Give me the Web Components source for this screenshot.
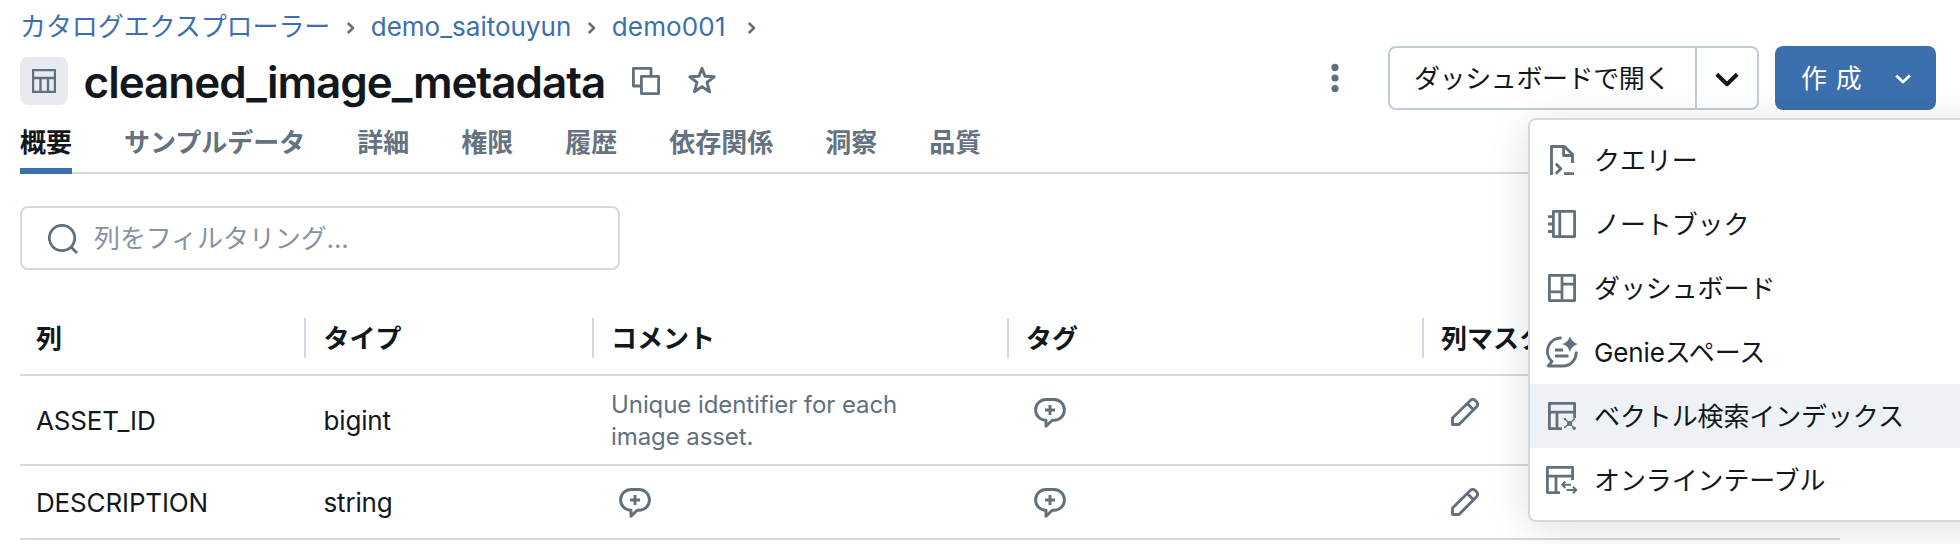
<!DOCTYPE html>
<html lang="ja">
<head>
<meta charset="utf-8">
<title>cleaned_image_metadata</title>
<style>
  html, body { margin: 0; height: 544px; overflow: hidden; background: #fff; }
  body {
    --text: #11171c; --muted: #62707d; --line: #d1d9e1; --blue: #3b6fae;
    font: 26px/32px Inter, "Noto Sans CJK JP", sans-serif; color: var(--text);
  }
</style>
</head>
<body>
<catalog-page></catalog-page>
<script>
const ICONS = {
  chevron: [9, 14, '<path d="M1.8 2 7 7 1.8 12" stroke-width="2.5"/>'],
  table: [24, 24, '<path d="M1 1h22v22H1zM1 9h22M8.5 9v14M16 9v14" stroke-width="2.4"/>'],
  copy: [28, 28, '<path d="M9 19H1.4V1.4H19V9M9.4 9.4h17.2v17.2H9.4z" stroke-width="2.8"/>'],
  star: [30, 30, '<path d="M15 3.2 18 11.3 27.2 11.8 20 17.4 22.6 26.8 15 21.6 7.4 26.8 10 17.4 2.8 11.8 12 11.3z" stroke-width="2.9"/>'],
  kebab: [8, 30, '<g fill="currentColor" stroke="none"><circle cx="4" cy="4.4" r="3.6"/><circle cx="4" cy="15" r="3.6"/><circle cx="4" cy="25.6" r="3.6"/></g>'],
  down: [24, 15, '<path d="M1.8 2.2 12 12.2 22.2 2.2" stroke-width="4"/>'],
  downSmall: [16, 10, '<path d="M1.2 1.4 8 8 14.8 1.4" stroke-width="2.8"/>'],
  search: [30, 30, '<circle cx="14" cy="14" r="12.7" stroke-width="2.8"/><path d="M23 23l6 6" stroke-width="2.8"/>'],
  bubble: [32, 31, '<path d="M12 1.5h8a10.4 10.4 0 0 1 0 20.8h-1.8L12 28.3v-6a10.4 10.4 0 0 1 0-20.8zM16 7v10M11 12h10" stroke-width="2.9"/>'],
  pencil: [28, 28, '<path d="M1.5 26.5V20L19.6 2.2q2.4-1.8 4.6.3l1.3 1.3q2.1 2.2.3 4.6L8 26.5zM16.3 5.5l6.2 6.2" stroke-width="2.9"/>'],
  query: [24, 30, '<path d="M1.5 30V1.5h13l8 8V18M13.6 1.5v9h9M5.8 18.8l5 5-5 5M14 28.6h10" stroke-width="2.9"/>'],
  notebook: [28, 28, '<path d="M5.4 1.4h21.2v25.2H5.4zM11.8 1.4v25.2M0 6.6h5M0 14h5M0 21.5h5" stroke-width="2.8"/>'],
  dashboard: [28, 28, '<path d="M1.4 1.4h25.2v25.2H1.4zM14 1.4v25.2M1.4 17.8H14M14 10.2h12.6" stroke-width="2.8"/>'],
  genie: [32, 32, '<path d="M15.6 2A13.4 13.4 0 0 0 6 25.4L2.2 30H17A13.4 13.4 0 0 0 30.2 15.6M9 14h8M9 20h13.5" stroke-width="2.9"/><path d="M24 .2q1.8 6 7.8 7.8-6 1.8-7.8 7.8-1.8-6-7.8-7.8 6-1.8 7.8-7.8z" fill="currentColor" stroke="none"/>'],
  vector: [28, 28, '<path d="M14 26.6H1.4V1.4h25.2V16M1.4 10.2h25.2M9 10.2v16.4" stroke-width="2.8"/><path d="M17 17l4.5 4.5L26.5 17M17 25l4.5-3.5L26 26" stroke-width="1.3"/><g fill="currentColor" stroke="none"><circle cx="21.6" cy="21.6" r="2.5"/><circle cx="17" cy="17" r="1.2"/><circle cx="26.2" cy="17.2" r="1"/><circle cx="16.8" cy="25.2" r="1"/><circle cx="26.2" cy="26.2" r="1.7"/></g>'],
  online: [32, 28, '<path d="M14 26.6H1.4V1.4h25.2V14M1.4 10.2h25.2M10 10.2v16.4" stroke-width="2.8"/><path d="M25 18.8h-8.6M19.4 15.6l-3.2 3.2 3.2 3.2M20.5 24h9.6M27 20.8l3.2 3.2-3.2 3.2" stroke-width="2"/>']
};

class Base extends HTMLElement {
  connectedCallback() {
    if (this.shadowRoot) return;
    this.attachShadow({ mode: 'open' }).innerHTML = this.render();
  }
}
const define = (name, render) =>
  customElements.define(name, class extends Base { render() { return render(this); } });

define('ui-icon', el => {
  const [w, h, body] = ICONS[el.getAttribute('name')];
  return `<style>:host{display:block;flex:none;color:var(--muted)}svg{display:block}</style>
    <svg width="${w}" height="${h}" viewBox="0 0 ${w} ${h}" fill="none" stroke="currentColor" stroke-linejoin="round">${body}</svg>`;
});

define('bread-crumbs', () => `
  <style>
    :host{display:flex;align-items:center;height:31px;padding:11px 20px 0;color:var(--blue)}
    ui-icon{margin:3px 16px 0 15.5px}
    .end{margin-left:21px}
    .first{letter-spacing:-.08px}
    .last{letter-spacing:.15px}
  </style>
  <span class="first">カタログエクスプローラー</span><ui-icon name="chevron"></ui-icon>
  <span>demo_saitouyun</span><ui-icon name="chevron"></ui-icon>
  <span class="last">demo001</span><ui-icon class="end" name="chevron"></ui-icon>`);

define('title-bar', () => `
  <style>
    :host{display:flex;align-items:center;height:64px;margin-top:4px;padding:0 24px 0 20px}
    .box{display:grid;place-items:center;width:48px;height:48px;border-radius:8px;background:#e7ebf0;margin-top:6px}
    h1{margin:8px 27px 0 15.5px;font-size:44px;line-height:48px;font-weight:600;letter-spacing:-1px}
    .star{margin:4px auto 0 27px}
    .copy{margin-top:6px}
    .kebab{margin-right:49px}
  </style>
  <div class="box"><ui-icon name="table"></ui-icon></div>
  <h1>cleaned_image_metadata</h1>
  <ui-icon class="copy" name="copy"></ui-icon>
  <ui-icon class="star" name="star"></ui-icon>
  <ui-icon class="kebab" name="kebab"></ui-icon>
  <split-button>ダッシュボードで開く</split-button>
  <create-button>作 成</create-button>`);

define('split-button', () => `
  <style>
    :host{display:flex;box-sizing:border-box;width:371px;height:64px;border:2px solid #c0cdd8;border-radius:8px;margin-right:16px}
    .label{display:flex;align-items:center;box-sizing:border-box;width:307px;padding:1px 0 0 24px;border-right:2px solid #c0cdd8;white-space:nowrap;letter-spacing:-.4px}
    .more{flex:1;display:grid;place-items:center}
    ui-icon{color:var(--text);margin-top:2px}
  </style>
  <div class="label"><slot></slot></div><div class="more"><ui-icon name="down"></ui-icon></div>`);

define('create-button', () => `
  <style>
    :host{display:flex;align-items:center;justify-content:space-between;box-sizing:border-box;width:161px;height:64px;padding:0 25px 0 26px;border-radius:8px;background:var(--blue);color:#fff;white-space:nowrap}
    ui-icon{color:#fff;margin-top:1px}
    span{word-spacing:1.5px;padding-top:1px}
  </style>
  <span><slot></slot></span><ui-icon name="downSmall"></ui-icon>`);

define('tab-bar', () => `
  <style>
    :host{display:flex;gap:52px;height:62px;margin-left:20px;border-bottom:2px solid var(--line);font-weight:700;color:#65727f}
    span{box-sizing:border-box;height:64px;padding-top:17px}
    .on{color:var(--text);border-bottom:6px solid var(--blue)}
  </style>
  ${['概要', 'サンプルデータ', '詳細', '権限', '履歴', '依存関係', '洞察', '品質'].map((t, i) => `<span${i ? '' : ' class="on"'}>${t}</span>`).join('')}`);

define('filter-field', () => `
  <style>
    :host{display:flex;align-items:center;gap:16px;box-sizing:border-box;width:600px;height:64px;margin:32px 20px;padding-left:26px;border:2px solid var(--line);border-radius:8px;color:#8593a2;letter-spacing:-.1px}
    ui-icon{margin-top:1px}
    span{padding-top:1px}
  </style>
  <ui-icon name="search"></ui-icon><span><slot></slot></span>`);

define('table-row', el => `
  <style>
    :host{display:grid;grid-template-columns:287.5px 287.5px 415px 415px 415px;box-sizing:border-box;width:1820px;height:${el.getAttribute('height')}px;margin-left:20px;border-bottom:2px solid var(--line)}
  </style><slot></slot>`);

define('head-cell', el => `
  <style>
    :host{display:flex;align-items:center;justify-content:space-between;padding:0 1.5px 0 16px;font-weight:700}
    i{width:2px;height:40px;background:var(--line)}
    span{padding-top:1px}
  </style><span><slot></slot></span>${el.hasAttribute('last') ? '' : '<i></i>'}`);

define('body-cell', () => `
  <style>
    :host{display:flex;align-items:center;padding:1px 16px 0;letter-spacing:-.15px}
    :host([icon]){align-items:flex-start;padding:22px 0 0 24px}
    :host([icon=edit]){padding-left:26px}
    :host([note]){font-size:24px;color:var(--muted);padding-top:1px;letter-spacing:-.08px}
    span{max-width:310px}
  </style><span><slot></slot></span>`);

define('menu-item', () => `
  <style>
    :host{display:flex;align-items:center;height:64px;padding-left:16px;white-space:nowrap;letter-spacing:-.12px}
    :host([active]){background:#eef2f7}
    div{display:grid;place-items:center;width:32px;margin-right:16px}
    span{padding-top:1px}
  </style><div><slot name="icon"></slot></div><span><slot></slot></span>`);

define('create-menu', () => `
  <style>
    :host{position:absolute;left:1528px;top:118px;box-sizing:border-box;width:480px;height:404px;padding-top:8px;border:2px solid var(--line);border-radius:8px;background:#fff;box-shadow:0 6px 40px rgba(0,0,0,.13)}
  </style>
  ${[['query', 'クエリー'], ['notebook', 'ノートブック'], ['dashboard', 'ダッシュボード'], ['genie', 'Genieスペース'], ['vector', 'ベクトル検索インデックス'], ['online', 'オンラインテーブル']]
    .map(([n, t]) => `<menu-item${n === 'vector' ? ' active' : ''}><ui-icon slot="icon" name="${n}"></ui-icon>${t}</menu-item>`).join('')}`);

define('catalog-page', () => `
  <style>:host{display:block;position:relative;width:1960px;height:544px;overflow:hidden}</style>
  <bread-crumbs></bread-crumbs>
  <title-bar></title-bar>
  <tab-bar></tab-bar>
  <filter-field>列をフィルタリング...</filter-field>
  <table-row height="74">
    <head-cell>列</head-cell><head-cell>タイプ</head-cell><head-cell>コメント</head-cell><head-cell>タグ</head-cell><head-cell last>列マスク</head-cell>
  </table-row>
  <table-row height="90">
    <body-cell>ASSET_ID</body-cell><body-cell>bigint</body-cell>
    <body-cell note>Unique identifier for each image asset.</body-cell>
    <body-cell icon><ui-icon name="bubble"></ui-icon></body-cell>
    <body-cell icon="edit"><ui-icon name="pencil"></ui-icon></body-cell>
  </table-row>
  <table-row height="74">
    <body-cell>DESCRIPTION</body-cell><body-cell>string</body-cell>
    <body-cell icon><ui-icon name="bubble"></ui-icon></body-cell>
    <body-cell icon><ui-icon name="bubble"></ui-icon></body-cell>
    <body-cell icon="edit"><ui-icon name="pencil"></ui-icon></body-cell>
  </table-row>
  <create-menu></create-menu>`);
</script>
</body>
</html>
